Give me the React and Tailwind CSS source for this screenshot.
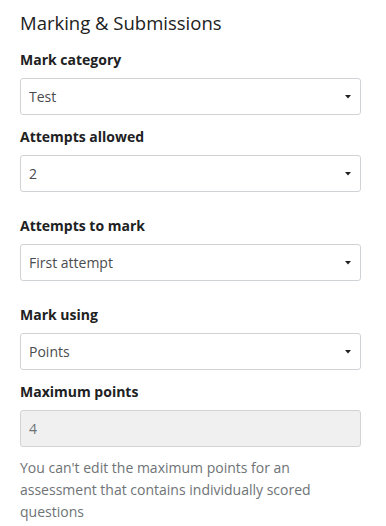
import { useState } from "react";

const fieldGaps = ["mt-[14px]", "mt-3", "mt-6", "mt-6", "mt-3"];

const SelectField = ({ label, value, options, onChange, className }) => {
  return (
    <div className={className}>
      <label className="block text-[14px] leading-[20px] font-bold text-[#202122] mb-2">
        {label}
      </label>
      <div className="relative">
        <select
          value={value}
          onChange={(e) => onChange(e.target.value)}
          className="appearance-none w-full h-[37px] border border-[#cfd3d6] rounded-[3px] bg-white pl-[8px] pr-8 text-[14px] text-[#494c4e] outline-none"
        >
          {options.map((opt) => (
            <option key={opt} value={opt}>
              {opt}
            </option>
          ))}
        </select>
        {/* caret */}
        <svg
          className="pointer-events-none absolute right-[10px] top-[17px]"
          width="6"
          height="4"
          viewBox="0 0 6 4"
        >
          <path d="M0 0 H6 L3 3.5 Z" fill="#202122" />
        </svg>
      </div>
    </div>
  );
};

const App = () => {
  const [category, setCategory] = useState("Test");
  const [attempts, setAttempts] = useState("2");
  const [toMark, setToMark] = useState("First attempt");
  const [markUsing, setMarkUsing] = useState("Points");

  return (
    <div
      className="bg-white min-h-[526px] pl-5 pr-[25px] pt-[9px]"
      style={{ fontFamily: '"Open Sans", "Liberation Sans", sans-serif' }}
    >
      <h2 className="text-[18.5px] leading-[27px] font-normal text-[#202122]">
        Marking &amp; Submissions
      </h2>

      <SelectField
        className={fieldGaps[0]}
        label="Mark category"
        value={category}
        options={["Test", "Quiz", "Assignment"]}
        onChange={setCategory}
      />
      <SelectField
        className={fieldGaps[1]}
        label="Attempts allowed"
        value={attempts}
        options={["1", "2", "3", "Unlimited"]}
        onChange={setAttempts}
      />
      <SelectField
        className={fieldGaps[2]}
        label="Attempts to mark"
        value={toMark}
        options={["First attempt", "Last attempt", "Highest attempt"]}
        onChange={setToMark}
      />
      <SelectField
        className={fieldGaps[3]}
        label="Mark using"
        value={markUsing}
        options={["Points", "Percentage"]}
        onChange={setMarkUsing}
      />

      <div className={fieldGaps[4]}>
        <label className="block text-[14px] leading-[20px] font-bold text-[#202122] mb-2">
          Maximum points
        </label>
        <input
          type="text"
          value="4"
          disabled
          readOnly
          className="w-full h-[37px] border border-[#d3d3d3] rounded-[3px] bg-[#f0f0f0] pl-[8px] text-[14px] text-[#6e7376]"
        />
        <p className="mt-[10px] text-[14px] leading-[22px] text-[#6e7376]">
          You can't edit the maximum points for an assessment that contains
          individually scored questions
        </p>
      </div>
    </div>
  );
};

export default App;
